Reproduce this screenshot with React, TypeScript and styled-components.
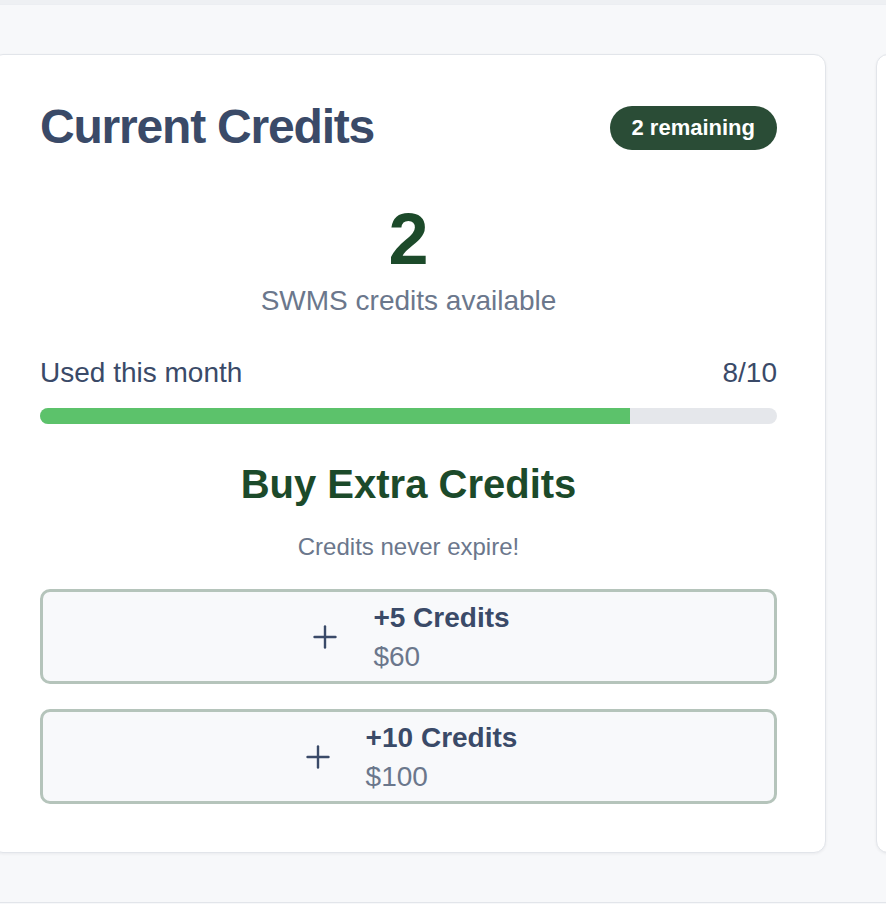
import React from "react";
import styled, { createGlobalStyle } from "styled-components";
import { Plus } from "lucide-react";

const GlobalStyle = createGlobalStyle`
  html, body {
    margin: 0;
    padding: 0;
    background: #f7f8fa;
    font-family: "Liberation Sans", Arial, Helvetica, sans-serif;
    overflow: hidden;
  }
  * { box-sizing: border-box; }
`;

const packs = [
  { amount: 5, price: 60 },
  { amount: 10, price: 100 },
];

const used = 8;
const limit = 10;

const App = () => {
  return (
    <>
      <GlobalStyle />
      <TopBar />
      <Main>
        <Card>
          <Header>
            <Title>Current Credits</Title>
            <Badge>{limit - used} remaining</Badge>
          </Header>

          <Balance>
            <BigNumber>{limit - used}</BigNumber>
            <Caption>SWMS credits available</Caption>
          </Balance>

          <UsageRow>
            <span>Used this month</span>
            <span>
              {used}/{limit}
            </span>
          </UsageRow>
          <Track>
            <Fill style={{ width: `${(used / limit) * 100}%` }} />
          </Track>

          <SectionTitle>Buy Extra Credits</SectionTitle>
          <Note>Credits never expire!</Note>

          <PackList>
            {packs.map((p) => (
              <PackButton key={p.amount}>
                <Plus size={36} strokeWidth={1.6} />
                <PackText>
                  <PackName>+{p.amount} Credits</PackName>
                  <PackPrice>${p.price}</PackPrice>
                </PackText>
              </PackButton>
            ))}
          </PackList>
        </Card>
        <Card />
      </Main>
      <Footer />
    </>
  );
};

export default App;

const TopBar = styled.div`
  height: 5px;
  background: #eef0f3;
  border-bottom: 1px solid #eceef2;
`;

const Main = styled.main`
  display: flex;
  gap: 50px;
  margin-left: -9px;
  padding: 49px 0 49px;
`;

const Card = styled.section`
  flex: 0 0 835px;
  background: #ffffff;
  border: 1px solid #e2e5ea;
  border-radius: 12px;
  box-shadow: 0 1px 3px rgba(16, 24, 40, 0.06);
  padding: 48px 48px 48px;
  display: flex;
  flex-direction: column;
`;

const Header = styled.div`
  display: flex;
  align-items: center;
  justify-content: space-between;
`;

const Title = styled.h2`
  margin: 0;
  font-size: 48px;
  line-height: 48px;
  font-weight: 700;
  letter-spacing: -0.025em;
  color: #3a4a68;
`;

const Badge = styled.span`
  margin-top: 2px;
  height: 44px;
  padding: 0 22px;
  border-radius: 999px;
  background: #2a4c36;
  color: #ffffff;
  font-size: 22px;
  font-weight: 700;
  display: inline-flex;
  align-items: center;
`;

const Balance = styled.div`
  display: flex;
  flex-direction: column;
  align-items: center;
  margin-top: 52px;
`;

const BigNumber = styled.div`
  font-size: 72px;
  line-height: 72px;
  font-weight: 700;
  color: #1c4a2a;
`;

const Caption = styled.div`
  margin-top: 5px;
  font-size: 28px;
  line-height: 42px;
  color: #6b778c;
`;

const UsageRow = styled.div`
  margin-top: 30px;
  display: flex;
  justify-content: space-between;
  font-size: 28px;
  line-height: 42px;
  color: #3a4a68;
`;

const Track = styled.div`
  margin-top: 14px;
  height: 16px;
  border-radius: 999px;
  background: #e5e7eb;
  overflow: hidden;
`;

const Fill = styled.div`
  height: 100%;
  background: #5cc26b;
`;

const SectionTitle = styled.h3`
  margin: 36px 0 0;
  text-align: center;
  font-size: 40px;
  line-height: 48px;
  font-weight: 700;
  color: #1c4a2a;
`;

const Note = styled.p`
  margin: 21px 0 0;
  text-align: center;
  font-size: 24px;
  line-height: 36px;
  color: #6b778c;
`;

const PackList = styled.div`
  margin-top: 24px;
  display: flex;
  flex-direction: column;
  gap: 25px;
`;

const PackButton = styled.button`
  display: flex;
  align-items: center;
  justify-content: center;
  gap: 30px;
  height: 95px;
  padding: 0 16px;
  border: 3px solid #b5c4bb;
  border-radius: 10px;
  background: #f8f9fb;
  color: #3a4a68;
  font-family: inherit;
  cursor: pointer;
`;

const PackText = styled.div`
  display: flex;
  flex-direction: column;
  align-items: flex-start;
`;

const PackName = styled.span`
  font-size: 28px;
  line-height: 39px;
  font-weight: 700;
  color: #3a4a68;
`;

const PackPrice = styled.span`
  font-size: 28px;
  line-height: 39px;
  color: #6b778c;
`;

const Footer = styled.footer`
  height: 40px;
  border-top: 1px solid #e2e5ea;
  background: #f7f8fa;
`;
